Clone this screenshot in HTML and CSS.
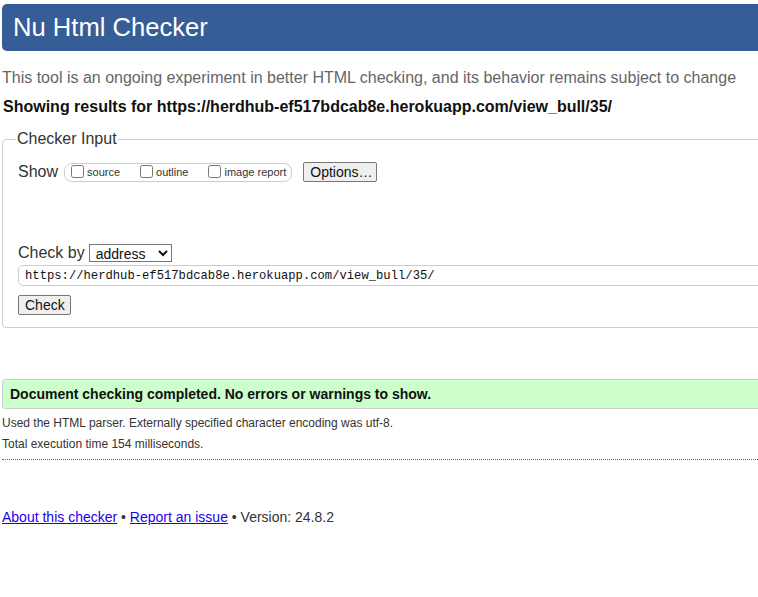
FILE: index.html
```html
<!DOCTYPE html>
<html lang="en">
<head>
<meta charset="utf-8">
<title>Nu Html Checker</title>
<link rel="stylesheet" href="styles.css">
</head>
<body>
<div class="page">
  <h1 class="banner">Nu Html Checker</h1>
  <p class="intro">This tool is an ongoing experiment in better HTML checking, and its behavior remains subject to change</p>
  <p class="showing">Showing results for https://herdhub-ef517bdcab8e.herokuapp.com/view_bull/35/</p>

  <fieldset class="input-box">
    <legend class="legend">Checker Input</legend>
    <div class="show-row">
      <span class="row-label">Show</span>
      <span class="pill">
        <label class="opt"><input type="checkbox" class="cb">source</label>
        <label class="opt"><input type="checkbox" class="cb">outline</label>
        <label class="opt last"><input type="checkbox" class="cb">image report</label>
      </span>
      <button type="button" class="btn options">Options…</button>
    </div>
    <div class="checkby-row">
      <span class="row-label">Check by</span>
      <select class="sel"><option>address</option></select>
    </div>
    <input type="text" class="url" value="https://herdhub-ef517bdcab8e.herokuapp.com/view_bull/35/">
    <div class="submit-row">
      <button type="button" class="btn check">Check</button>
    </div>
  </fieldset>

  <div class="success">Document checking completed. No errors or warnings to show.</div>
  <p class="details first">Used the HTML parser. Externally specified character encoding was utf-8.</p>
  <p class="details">Total execution time 154 milliseconds.</p>
  <hr class="dots">

  <p class="footer"><a href="#" class="link">About this checker</a> • <a href="#" class="link">Report an issue</a> • Version: 24.8.2</p>
</div>
</body>
</html>
```

FILE: styles.css
```css
html {
  overflow: hidden;
  background: #fff;
}
body {
  margin: 0;
  font-family: "Liberation Sans", Arial, sans-serif;
  color: #222;
}
.page {
  width: 840px;
  padding-left: 2px;
}
.banner {
  margin: 4px 0 0 0;
  height: 47px;
  line-height: 47px;
  padding-left: 11px;
  background: #365d95;
  color: #fff;
  font-size: 25.6px;
  font-weight: normal;
  border-radius: 5px;
}
.intro {
  margin: 18px 0 0 0;
  font-size: 16px;
  line-height: 18px;
  color: #666;
}
.showing {
  margin: 11px 0 0 1px;
  font-size: 16px;
  line-height: 18px;
  font-weight: bold;
  color: #111;
}
.input-box {
  margin: 14px 0 0 0;
  padding: 0 16px 12px 15px;
  border: 1px solid #ccc;
  border-radius: 4px;
}
.legend {
  padding: 0 1px;
  margin-left: -2px;
  font-size: 16px;
  line-height: 18px;
  color: #333;
}
.show-row {
  display: flex;
  align-items: center;
  margin-top: 14px;
  height: 20px;
}
.row-label {
  font-size: 16px;
  line-height: 18px;
  color: #333;
}
.pill {
  display: flex;
  align-items: center;
  margin-left: 6px;
  height: 17px;
  padding: 0 5px 0 2px;
  border: 1px solid #ccc;
  border-radius: 8px;
}
.opt {
  display: flex;
  align-items: center;
  font-size: 11px;
  color: #333;
  padding-right: 16px;
}
.opt.last {
  padding-right: 0;
}
.cb {
  width: 13px;
  height: 13px;
  margin: 0 3px 2px 4px;
}
.btn {
  font-family: "Liberation Sans", Arial, sans-serif;
  font-size: 14px;
  color: #111;
  background: #efefef;
  border: 1px solid #767676;
  border-radius: 2px;
  padding: 0 6px;
  height: 20px;
  line-height: 18px;
}
.options {
  margin-left: 11px;
  width: 74px;
}
.checkby-row {
  display: flex;
  align-items: center;
  margin-top: 62px;
  height: 18px;
}
.sel {
  margin-left: 4px;
  width: 83px;
  height: 18px;
  font-family: "Liberation Sans", Arial, sans-serif;
  font-size: 14px;
  color: #111;
  border: 1px solid #767676;
  border-radius: 0;
  padding: 0 2px;
  background: #fff;
}
.url {
  display: block;
  box-sizing: border-box;
  margin: 3px 0 0 0;
  width: 800px;
  height: 21px;
  padding: 0 6px;
  border: 1px solid #ccc;
  border-radius: 5px;
  font-family: "Liberation Mono", "DejaVu Sans Mono", monospace;
  font-size: 12.2px;
  color: #111;
}
.submit-row {
  margin: 9px 0 0 0;
}
.check {
  width: 53px;
}
.success {
  margin-top: 51px;
  height: 28px;
  line-height: 28px;
  padding-left: 7px;
  background: #ccffcc;
  border: 1px solid #ccc;
  border-radius: 3px;
  font-size: 14px;
  font-weight: bold;
  color: #111;
}
.details {
  margin: 0;
  font-size: 12px;
  line-height: 21px;
  color: #333;
}
.details.first {
  margin-top: 4px;
}
.dots {
  margin: 4px 0 0 0;
  height: 0;
  border: 0;
  border-top: 1px dotted #666;
}
.footer {
  margin: 49px 0 0 0;
  font-size: 14px;
  line-height: 16px;
  color: #333;
}
.link {
  color: #2200ee;
}
```
